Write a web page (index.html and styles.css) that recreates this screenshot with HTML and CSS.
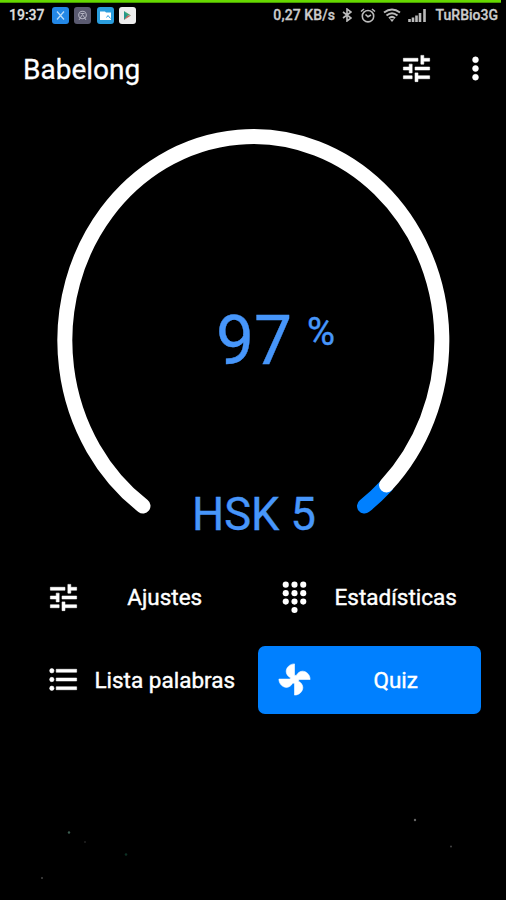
FILE: index.html
```html
<!DOCTYPE html>
<html lang="es">
<head>
<meta charset="utf-8">
<title>Babelong</title>
<link rel="stylesheet" href="styles.css">
</head>
<body>
<svg class="defs" width="0" height="0" aria-hidden="true">
  <symbol id="tune" viewBox="0 0 24 24"><path d="M3 17v2h6v-2H3zM3 5v2h10V5H3zm10 16v-2h8v-2h-8v-2h-2v6h2zM7 9v2H3v2h4v2h2V9H7zm14 4v-2H11v2h10zm-6-4h2V7h4V5h-4V3h-2v6z"/></symbol>
</svg>
<div class="screen">
  <div class="progress"></div>
  <div class="status">
    <span class="clock">19:37</span>
    <svg class="app" viewBox="0 0 17 17"><rect width="17" height="17" rx="3" fill="#2387e6"/><path d="M5 4.500 8.500 8.500 12 4.500M5 12.500 8.500 8.500 12 12.500" fill="none" stroke="#b9dcfa" stroke-width="1.300"/></svg>
    <svg class="app" viewBox="0 0 17 17"><rect width="17" height="17" rx="3" fill="#5a5a70"/><circle cx="8.500" cy="8" r="3.800" fill="none" stroke="#b4b4c2" stroke-width="1.100"/><path d="M5 13 8.500 7.500 12 13M6.500 6.500h4" fill="none" stroke="#b4b4c2"/></svg>
    <svg class="app" viewBox="0 0 17 17"><rect width="17" height="17" rx="3" fill="#2a9ddd"/><path d="M3 4.500h5l1 1H14v7.500H3z" fill="#fff"/><path d="m9.500 10.500 1.500-2 2.500 3" fill="none" stroke="#2a9ddd"/></svg>
    <svg class="app" viewBox="0 0 17 17"><rect width="17" height="17" rx="3" fill="#eee"/><path d="M5 4v9l4-4.500z" fill="#24978c"/><path d="m5 4 7 4.500H8.500z" fill="#35a66c"/><path d="m5 13 7-4.500H8.500z" fill="#c8675a"/></svg>
    <span class="rate">0,27 KB/s</span>
    <svg class="bt" viewBox="0 0 10 14"><path d="m1 4 8 6-4 3V1l4 3-8 6"/></svg>
    <svg class="alarm" viewBox="0 0 16 15"><circle cx="8" cy="8.200" r="5.700"/><path d="M1 3.500 4 1M15 3.500 12 1M5.500 6.500 8 8.800l3-1.800"/></svg>
    <svg class="wifi" viewBox="0 0 18 14"><path d="M1 4.500Q9-1.500 17 4.500M3.500 7.500Q9 3 14.500 7.500M6 10.200Q9 7.500 12 10.200"/><path class="dot" d="M6.800 11.200h4.400L9 14z"/></svg>
    <svg class="signal" viewBox="0 0 19 13"><path d="M1.500 13v-3M5 13V8.500M8.500 13V6.500M12 13V4M16.500 13V0"/></svg>
    <span class="carrier">TuRBio3G</span>
  </div>
  <header class="bar">
    <h1>Babelong</h1>
    <svg class="icon"><use href="#tune"/></svg>
    <svg class="icon more" viewBox="0 0 24 24"><circle cx="12" cy="6" r="2"/><circle cx="12" cy="12" r="2"/><circle cx="12" cy="18" r="2"/></svg>
  </header>
  <svg class="dial" viewBox="0 110 506 440">
    <path class="rest" d="M386 486A188.500 204 0 0 1 364.500 506"/>
    <path class="done" d="M143 506A188.500 204 0 1 1 386.500 485"/>
    <text x="216" y="364" font-size="69" textLength="76" lengthAdjust="spacingAndGlyphs">97</text>
    <text x="307" y="344.500" font-size="38" textLength="28" lengthAdjust="spacingAndGlyphs">%</text>
    <text x="192" y="530" font-size="45.500" textLength="124" lengthAdjust="spacingAndGlyphs">HSK 5</text>
  </svg>
  <nav class="menu">
    <div class="item"><svg class="icon"><use href="#tune"/></svg><span>Ajustes</span></div>
    <div class="item"><svg class="icon dots" viewBox="0 0 24 24"><circle cx="6" cy="3.200" r="2.100"/><circle cx="12" cy="3.200" r="2.100"/><circle cx="18" cy="3.200" r="2.100"/><circle cx="6" cy="9" r="2.100"/><circle cx="12" cy="9" r="2.100"/><circle cx="18" cy="9" r="2.100"/><circle cx="6" cy="14.800" r="2.100"/><circle cx="12" cy="14.800" r="2.100"/><circle cx="18" cy="14.800" r="2.100"/><circle cx="12" cy="20.600" r="2.100"/></svg><span>Estadísticas</span></div>
    <div class="item"><svg class="icon" viewBox="0 0 24 24"><circle cx="4" cy="6" r="1.500"/><circle cx="4" cy="12" r="1.500"/><circle cx="4" cy="18" r="1.500"/><path d="M7 5h14v2H7zM7 11h14v2H7zM7 17h14v2H7z"/></svg><span>Lista palabras</span></div>
    <div class="item active"><svg class="icon" viewBox="0 0 24 24"><path d="M12 1.300C8.500 1.300 6.300 4 6.300 6.500c0 2 1.300 3.400 3 4.300l-.3.900H1.300c0 3.500 2.700 5.700 5.200 5.700 2 0 3.400-1.300 4.300-3l1.200.300v8c3.500 0 5.700-2.700 5.700-5.200 0-2-1.300-3.400-3-4.300l.3-1.200h7.700c0-3.500-2.700-5.700-5.200-5.700-2 0-3.400 1.300-4.300 3L12 9z"/></svg><span>Quiz</span></div>
  </nav>
  <svg class="specks" viewBox="0 800 506 100"><circle cx="69" cy="832.500" r="1.200" fill="#3c5c50"/><circle cx="85" cy="842" r="1" fill="#222"/><circle cx="126" cy="854.500" r="1.300" fill="#0d3024"/><circle cx="42" cy="878" r="1" fill="#444"/><circle cx="415" cy="820" r="1.200" fill="#666"/><circle cx="451" cy="846.500" r="1" fill="#444"/></svg>
</div>
</body>
</html>
```
FILE: styles.css
```css
body {
  margin: 0;
  background: #000;
  color: #fff;
  font-family: Roboto, "Liberation Sans", sans-serif;
}
.defs { display: block; }
.screen {
  display: flex;
  flex-direction: column;
  width: 506px;
  height: 900px;
  overflow: hidden;
}
.progress {
  flex: none;
  width: 501px;
  height: 3px;
  background: linear-gradient(#66d800 0 2px, #2c6000);
}
.status {
  display: flex;
  align-items: center;
  height: 24px;
  padding: 0 8px 0 9px;
  color: #ccc;
  font-size: 14px;
  font-weight: 500;
  -webkit-text-stroke: 0.3px currentColor;
  white-space: nowrap;
}
.clock { width: 42.500px; color: #ddd; }
.app { width: 17px; height: 17px; margin-right: 5.500px; }
.rate { margin-left: auto; margin-right: 7px; }
.status svg { flex: none; }
.bt, .alarm, .wifi, .signal { fill: none; stroke: #bbb; stroke-width: 1.600px; }
.bt { width: 10px; height: 14px; margin-right: 8px; }
.alarm { width: 16px; height: 15px; margin-right: 7px; }
.wifi { width: 18px; height: 14px; margin-right: 7px; stroke-width: 2px; }
.wifi .dot { fill: #bbb; stroke: none; }
.signal { width: 19px; height: 13px; margin-right: 8.500px; stroke-width: 2.600px; }
.rate { letter-spacing: 0.1px; }
.bar {
  display: flex;
  align-items: center;
  height: 83px;
  padding: 0 13px 0 23px;
}
h1 {
  flex: 1;
  margin: 0;
  padding-top: 2px;
  font-size: 28px;
  font-weight: 400;
  -webkit-text-stroke: 0.3px #fff;
}
.icon {
  flex: none;
  width: 35px;
  height: 35px;
  fill: #fff;
  stroke: #fff;
  stroke-width: 0.4px;
}
.dots { stroke: none; }
.more { margin-left: 24px; }
.dial { flex: none; width: 506px; height: 440px; }
.dial path { fill: none; stroke-width: 15px; stroke-linecap: round; }
.dial .done { stroke: #fff; }
.dial .rest { stroke: #0080ff; }
.dial text { fill: #4796fa; stroke: #4796fa; stroke-width: 0.4px; }
.menu {
  display: grid;
  grid-template-columns: 223px 223px;
  grid-auto-rows: 68px;
  gap: 14.500px 8px;
  margin: 13px 0 0 26.500px;
}
.item {
  display: flex;
  align-items: center;
  padding-left: 19.500px;
  border-radius: 7px;
  font-size: 22.500px;
  -webkit-text-stroke: 0.4px #fff;
}
.item span { flex: 1; margin-left: -1px; text-align: center; white-space: nowrap; }
.active { background: #0080ff; }
.specks { flex: none; width: 506px; height: 100px; margin-top: auto; }
```
